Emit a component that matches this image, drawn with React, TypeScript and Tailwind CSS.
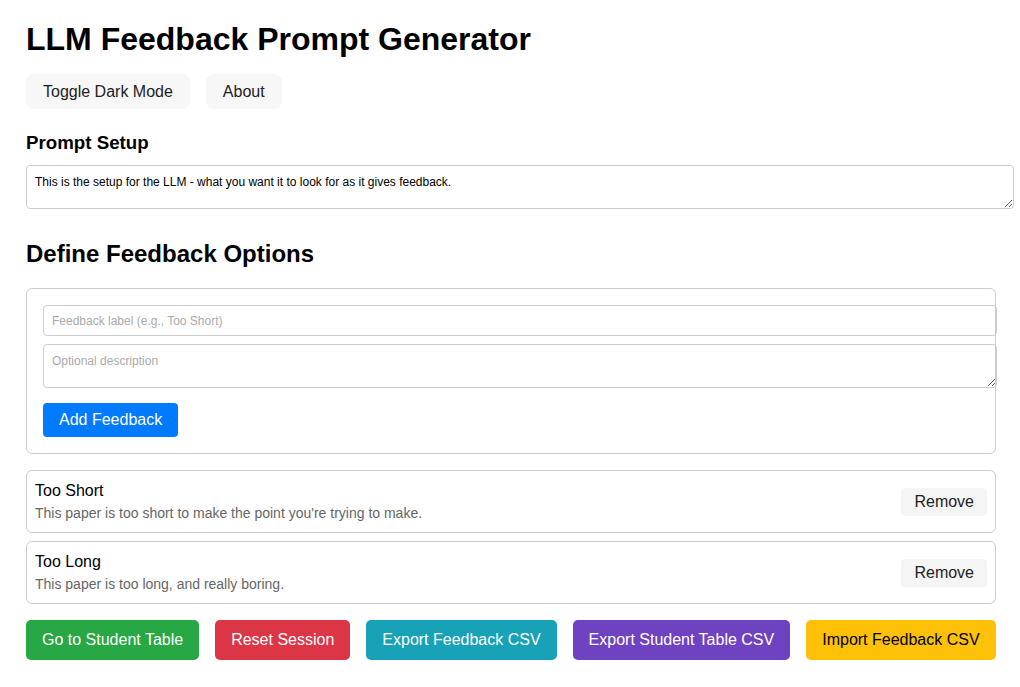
import { useState } from "react"

type Feedback = { label: string; description: string }

const initialFeedback: Feedback[] = [
  { label: "Too Short", description: "This paper is too short to make the point you're trying to make." },
  { label: "Too Long", description: "This paper is too long, and really boring." },
]

const actions = [
  { label: "Go to Student Table", cls: "bg-[#28a745] text-white" },
  { label: "Reset Session", cls: "bg-[#dc3545] text-white" },
  { label: "Export Feedback CSV", cls: "bg-[#17a2b8] text-white" },
  { label: "Export Student Table CSV", cls: "bg-[#6f42c1] text-white" },
  { label: "Import Feedback CSV", cls: "bg-[#ffc107] text-black" },
]

export default function App() {
  const [items, setItems] = useState<Feedback[]>(initialFeedback)
  const [setup, setSetup] = useState(
    "This is the setup for the LLM - what you want it to look for as it gives feedback.",
  )
  const [label, setLabel] = useState("")
  const [desc, setDesc] = useState("")

  const add = () => {
    if (!label.trim()) return
    setItems([...items, { label, description: desc }])
    setLabel("")
    setDesc("")
  }

  return (
    <div className="min-h-screen bg-white text-black px-[26px] pt-[21px] pb-8 font-['Liberation_Sans',Arial,sans-serif]">
      <div className="w-[970px]">
        <h1 className="text-[32px] font-bold leading-[37px]">LLM Feedback Prompt Generator</h1>

        {/* 顶部按钮 */}
        <div className="flex gap-4 mt-4">
          <button className="h-[35px] px-[17px] rounded-lg bg-[#f7f7f7] text-[16px] text-[#222]">
            Toggle Dark Mode
          </button>
          <button className="h-[35px] px-[17px] rounded-lg bg-[#f7f7f7] text-[16px] text-[#222]">
            About
          </button>
        </div>

        <h3 className="mt-[23px] text-[18.72px] font-bold leading-[22px]">Prompt Setup</h3>
        <textarea
          value={setup}
          onChange={(e) => setSetup(e.target.value)}
          className="block mt-[11px] w-[988px] h-[44px] px-2 pt-[9px] pb-2 border border-[#ccc] rounded text-[12px] leading-[14px] text-black outline-none"
        />

        <h2 className="mt-[31px] text-[24px] font-bold leading-[28px]">Define Feedback Options</h2>

        {/* 新增反馈表单 */}
        <div className="mt-5 border border-[#ccc] rounded-md p-4">
          <input
            value={label}
            onChange={(e) => setLabel(e.target.value)}
            placeholder="Feedback label (e.g., Too Short)"
            className="block w-[954px] h-[31px] px-2 border border-[#ccc] rounded text-[12px] outline-none placeholder:text-[#aaa]"
          />
          <textarea
            value={desc}
            onChange={(e) => setDesc(e.target.value)}
            placeholder="Optional description"
            className="block mt-2 w-[954px] h-[44px] px-2 pt-[9px] pb-2 border border-[#ccc] rounded text-[12px] leading-[14px] outline-none placeholder:text-[#aaa]"
          />
          <button
            onClick={add}
            className="mt-[15px] h-[34px] px-4 rounded bg-[#007bff] text-white text-[16px]"
          >
            Add Feedback
          </button>
        </div>

        {/* 反馈列表 */}
        <div className="mt-4 flex flex-col gap-2">
          {items.map((item, i) => (
            <div
              key={i}
              className="h-[63px] border border-[#ccc] rounded-md px-2 flex items-center justify-between"
            >
              <div className="min-w-0 pb-[1px]">
                <div className="text-[16px] leading-[20px]">{item.label}</div>
                <div className="mt-[4px] text-[14px] leading-[17px] text-[#666]">{item.description}</div>
              </div>
              <button
                onClick={() => setItems(items.filter((_, j) => j !== i))}
                className="shrink-0 h-[28px] px-[13px] rounded bg-[#f5f5f5] text-[16px] text-[#222]"
              >
                Remove
              </button>
            </div>
          ))}
        </div>

        {/* 底部操作 */}
        <div className="mt-4 flex gap-4">
          {actions.map((a) => (
            <button key={a.label} className={`h-[40px] px-4 rounded-[5px] text-[16px] ${a.cls}`}>
              {a.label}
            </button>
          ))}
        </div>
      </div>
    </div>
  )
}
